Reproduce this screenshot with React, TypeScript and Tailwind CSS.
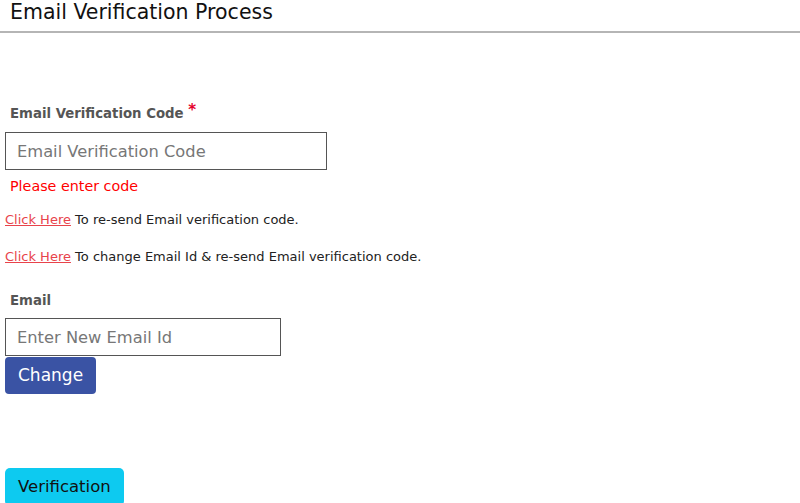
export default function App() {
  return (
    <div className="w-[800px] h-[503px] overflow-hidden bg-white font-['DejaVu_Sans',sans-serif] text-[#212529]">
      {/* Header */}
      <div className="h-[33px] border-b-2 border-[#b5b5b5] pl-[10px]">
        <h1 className="text-[20.5px] leading-[24px] text-[#111]">Email Verification Process</h1>
      </div>

      <div className="px-[5px]">
        <div className="pt-[70px]">
          <label className="block pl-[5px] text-[13.3px] leading-[20px] font-bold text-[#555]">
            Email Verification Code <span className="text-[#e4002b] text-[15px] relative -top-[3px]">*</span>
          </label>
          <input
            placeholder="Email Verification Code"
            className="mt-[8px] block w-[322px] h-[38px] border border-[#555] px-[11px] text-[16.3px] placeholder:text-[#777] outline-none"
          />
          <p className="mt-[6px] pl-[5px] text-[14.3px] leading-[20px] text-[#ff0000]">Please enter code</p>
        </div>

        <p className="mt-[14px] text-[13px] leading-[20px] text-[#222]">
          <a href="#" className="text-[#e8434b] underline">Click Here</a> To re-send Email verification code.
        </p>
        <p className="mt-[17px] text-[13px] leading-[20px] text-[#222]">
          <a href="#" className="text-[#e8434b] underline">Click Here</a> To change Email Id &amp; re-send Email verification code.
        </p>

        <div className="mt-[24px]">
          <label className="block pl-[5px] text-[13.3px] leading-[20px] font-bold text-[#555]">Email</label>
          <input
            placeholder="Enter New Email Id"
            className="mt-[7px] block w-[276px] h-[38px] border border-[#555] px-[11px] text-[16.3px] placeholder:text-[#777] outline-none"
          />
          <button className="mt-[1px] h-[37px] px-[13px] rounded-[4px] bg-[#3a53a4] text-white text-[17px]">
            Change
          </button>
        </div>

        <button className="mt-[74px] h-[38px] px-[13px] rounded-[5px] bg-[#0dcaf0] text-[#111] text-[16.5px]">
          Verification
        </button>
      </div>
    </div>
  );
}
